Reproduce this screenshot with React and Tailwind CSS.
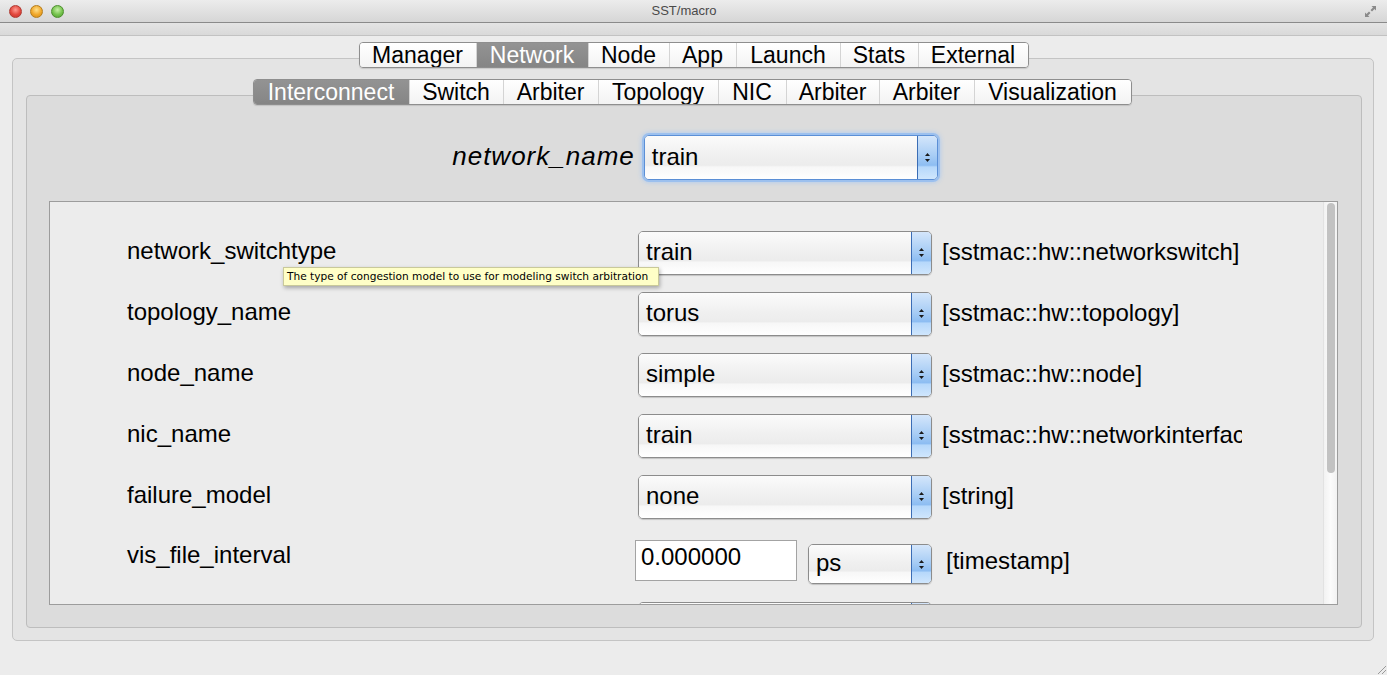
import React from 'react';

const outerTabs = [
  { label: 'Manager', w: 'w-[116px]' },
  { label: 'Network', w: 'w-[112px]', active: true },
  { label: 'Node', w: 'w-[81px]' },
  { label: 'App', w: 'w-[67px]' },
  { label: 'Launch', w: 'w-[104px]' },
  { label: 'Stats', w: 'w-[78px]' },
  { label: 'External', w: 'w-[110px]' },
];

const innerTabs = [
  { label: 'Interconnect', w: 'w-[155px]', active: true },
  { label: 'Switch', w: 'w-[94px]' },
  { label: 'Arbiter', w: 'w-[95px]' },
  { label: 'Topology', w: 'w-[120px]' },
  { label: 'NIC', w: 'w-[68px]' },
  { label: 'Arbiter', w: 'w-[93px]' },
  { label: 'Arbiter', w: 'w-[95px]' },
  { label: 'Visualization', w: 'w-[157px]' },
];

const params = [
  { name: 'network_switchtype', value: 'train', type: '[sstmac::hw::networkswitch]' },
  { name: 'topology_name', value: 'torus', type: '[sstmac::hw::topology]' },
  { name: 'node_name', value: 'simple', type: '[sstmac::hw::node]' },
  { name: 'nic_name', value: 'train', type: '[sstmac::hw::networkinterface]' },
  { name: 'failure_model', value: 'none', type: '[string]' },
];

function Arrows() {
  return (
    <svg width="7" height="11" viewBox="0 0 7 11">
      <path d="M3.5 1 L6 4 L1 4 Z" fill="#1a1a1a" />
      <path d="M3.5 10 L6 7 L1 7 Z" fill="#1a1a1a" />
    </svg>
  );
}

// mac style popup button
function Combo({ value, w = 'w-[294px]', h = 'h-[44px]', focus }) {
  return (
    <div
      className={`${w} ${h} flex shrink-0 overflow-hidden rounded-[5px] border ${
        focus
          ? 'border-[#5b8fd6] shadow-[0_0_0_2px_#9cc0ee,0_0_5px_2px_#a9c9f2]'
          : 'border-[#8c8c8c] shadow-[0_1px_1px_rgba(0,0,0,0.18)]'
      }`}
    >
      <div className="flex flex-1 items-center bg-[linear-gradient(#fbfbfb,#f0f0f0_45%,#ececec_68%,#f7f7f7_72%,#ffffff)] pl-[7px] pb-[2px] text-[24px] text-black">
        {value}
      </div>
      <div className="flex w-[20px] items-center justify-center border-l border-[#3b6db5] bg-[linear-gradient(#d4e6fb,#a8cdf5_45%,#8dbdf2_68%,#b6d8fb_72%,#cfe6fd)]">
        <Arrows />
      </div>
    </div>
  );
}

function TabBar({ tabs }) {
  return (
    <div className="relative z-10 flex h-[26px] overflow-hidden rounded-[4px] border border-[#8e8e8e] shadow-[0_1px_1px_rgba(0,0,0,0.12)]">
      {tabs.map((t, i) => (
        <div
          key={i}
          className={`${t.w} flex items-center justify-center text-[23px] leading-none ${
            i > 0 ? 'border-l border-[#d4d4d4]' : ''
          } ${
            t.active
              ? 'bg-[linear-gradient(#939393,#858585)] text-white'
              : 'bg-[linear-gradient(#ffffff,#f3f3f3)] text-black'
          }`}
        >
          {t.label}
        </div>
      ))}
    </div>
  );
}

function TitleBar() {
  return (
    <div className="relative flex h-[23px] items-center border-b border-[#8a8a8a] bg-[linear-gradient(#ececec,#d6d6d6)] px-[8px]">
      <div className="flex gap-[8px] pl-[1px]">
        <span className="h-[13px] w-[13px] rounded-full border border-[#b03a33] bg-[radial-gradient(circle_at_50%_35%,#ff9b92,#e2473d_55%,#c0332b)]" />
        <span className="h-[13px] w-[13px] rounded-full border border-[#b57d1c] bg-[radial-gradient(circle_at_50%_35%,#ffe08a,#f0a72a_55%,#d08a18)]" />
        <span className="h-[13px] w-[13px] rounded-full border border-[#4c8f2c] bg-[radial-gradient(circle_at_50%_35%,#c6f0a5,#74c24c_55%,#4f9b30)]" />
      </div>
      <div className="flex-1 text-center text-[13px] text-[#4a4a4a] pr-[60px]">SST/macro</div>
      <svg width="13" height="13" viewBox="0 0 13 13" className="mr-[2px]">
        <path d="M7.5 1 H12 V5.5 L10.5 4 L8 6.5 L6.5 5 L9 2.5 Z" fill="#8a8a8a" />
        <path d="M5.5 12 H1 V7.5 L2.5 9 L5 6.5 L6.5 8 L4 10.5 Z" fill="#8a8a8a" />
      </svg>
    </div>
  );
}

export default function App() {
  return (
    <div className="relative h-[675px] w-[1387px] overflow-hidden bg-[#ececec] font-['Liberation_Sans',Arial,sans-serif] text-black">
      <TitleBar />
      <div className="h-[13px] border-b border-[#c2c2c2] bg-[linear-gradient(#e4e4e4,#d9d9d9)]" />

      {/* outer tab widget */}
      <div className="pl-[12px] pr-[13px] pt-[6px]">
        <div className="-mb-[10px] flex justify-center pl-[1px]">
          <TabBar tabs={outerTabs} />
        </div>
        <div className="h-[583px] rounded-[5px] border border-[#c4c4c4] bg-[#e4e4e4] pt-[20px]">
          <div className="-mb-[10px] flex justify-center pr-[2px]">
            <TabBar tabs={innerTabs} />
          </div>

          {/* inner pane */}
          <div className="ml-[13px] mr-[11px] h-[533px] rounded-[4px] border border-[#bdbdbd] bg-[#dcdcdc] pt-[39px]">
            <div className="flex h-[45px] items-center justify-center gap-[9px] pl-[2px]">
              <span className="text-[26px] italic tracking-[1px] pb-[2px]">network_name</span>
              <Combo value="train" w="w-[294px]" h="h-[45px]" focus />
            </div>

            {/* scroll area */}
            <div className="ml-[22px] mr-[23px] mt-[21px] flex h-[404px] border border-[#9c9c9c] bg-[#ececec]">
              <div className="flex-1 overflow-hidden pt-[20px] pl-[77px]">
                {params.map((p) => (
                  <div key={p.name} className="flex h-[61px] items-center">
                    <div className="w-[511px] text-[24px] pb-[4px]">{p.name}</div>
                    <Combo value={p.value} />
                    <div className="ml-[10px] w-[300px] overflow-hidden whitespace-nowrap text-[24px] pb-[2px]">
                      {p.type}
                    </div>
                  </div>
                ))}

                <div className="flex h-[66px] items-center">
                  <div className="w-[508px] text-[24px] pb-[10px]">vis_file_interval</div>
                  <div className="flex h-[41px] w-[162px] items-center border border-[#a3a3a3] bg-white pl-[5px] pb-[6px] text-[24px]">
                    0.000000
                  </div>
                  <div className="ml-[11px] mt-[8px]">
                    <Combo value="ps" w="w-[124px]" h="h-[40px]" />
                  </div>
                  <div className="ml-[14px] mt-[2px] text-[24px]">[timestamp]</div>
                </div>

                <div className="flex h-[61px] items-center">
                  <div className="w-[511px]" />
                  <Combo value="" />
                </div>
              </div>

              {/* scrollbar */}
              <div className="flex w-[14px] justify-center border-l border-[#e2e2e2] bg-[linear-gradient(90deg,#f2f2f2,#fbfbfb,#f2f2f2)] pt-[1px]">
                <div className="h-[270px] w-[8px] rounded-full bg-[#c2c2c2]" />
              </div>
            </div>
          </div>
        </div>
      </div>

      {/* tooltip */}
      <div className="absolute left-[283px] top-[267px] flex h-[19px] w-[376px] items-center whitespace-nowrap border border-[#c9c99a] bg-[#ffffc7] pl-[3px] font-['DejaVu_Sans',sans-serif] text-[10.6px] text-black shadow-[1px_2px_4px_rgba(0,0,0,0.3)]">
        The type of congestion model to use for modeling switch arbitration
      </div>

      {/* resize grip */}
      <svg width="12" height="12" viewBox="0 0 12 12" className="absolute bottom-0 right-0">
        <path d="M11 3 L3 11 M11 7 L7 11" stroke="#9a9a9a" strokeWidth="1" />
      </svg>
    </div>
  );
}
